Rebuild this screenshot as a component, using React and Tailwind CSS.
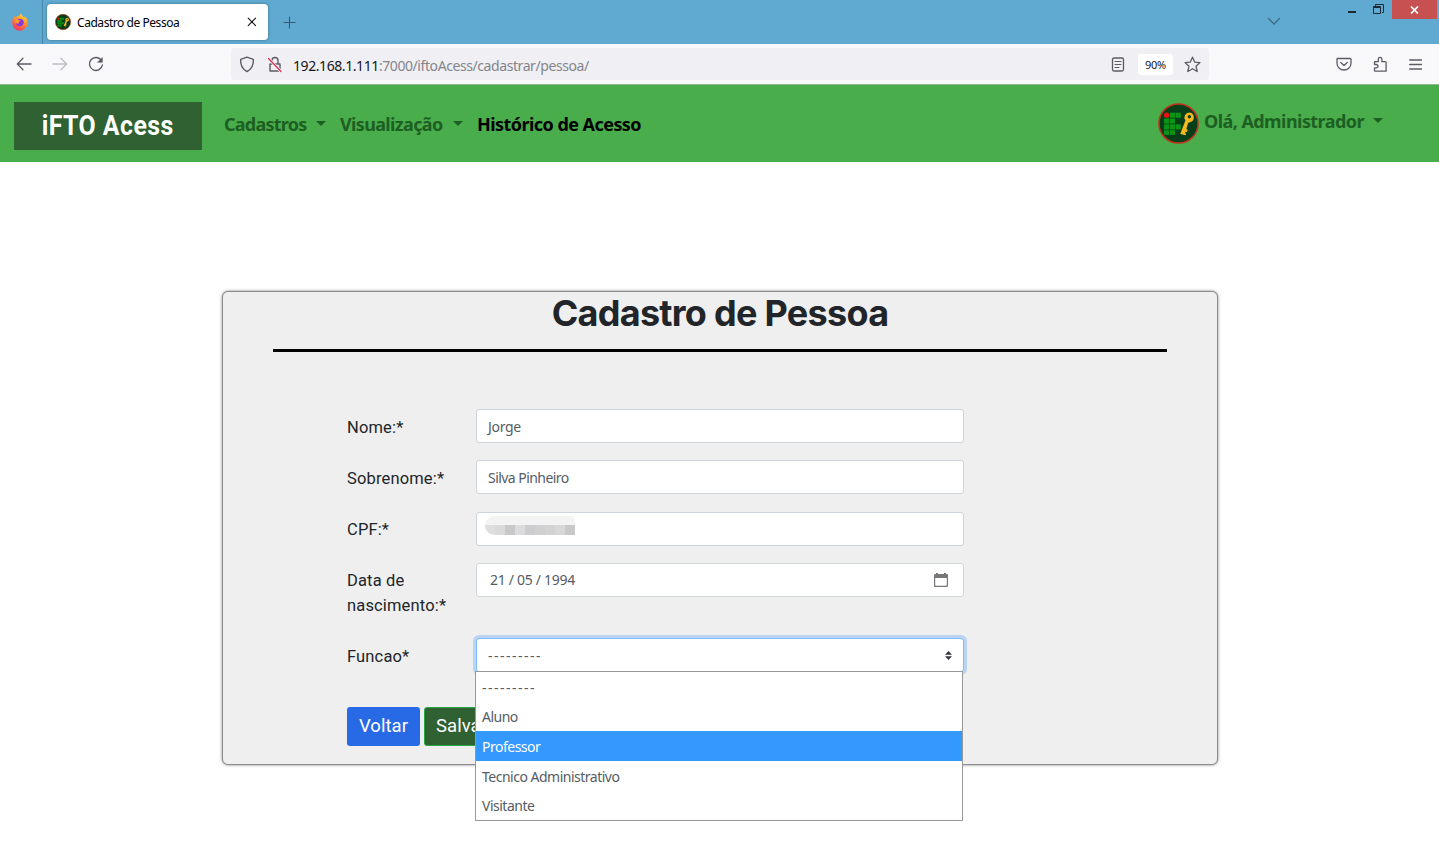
import React from "react";

const ui = "font-['Noto_Sans','Open_Sans',sans-serif]";

function Firefox() {
  return (
    <svg width="18" height="18" viewBox="0 0 18 18">
      <defs>
        <linearGradient id="fx" x1="0.8" y1="0" x2="0.3" y2="1">
          <stop offset="0" stopColor="#ffe03c" />
          <stop offset="0.45" stopColor="#ff9130" />
          <stop offset="1" stopColor="#f8305f" />
        </linearGradient>
      </defs>
      <path d="M3.2 3.2C4 4 4.4 4 5.6 4.1 6.6 3 7.6 2.8 8.6 2.6 8.6 1.8 9.4.8 10.3.6c.2 2 1.6 2.5 2.8 3.7l.9-.8c1.8 1.7 2.8 3.8 2.6 6.4A7.7 7.7 0 0 1 1.2 10C1 7.4 2 4.8 3.2 3.2z" fill="url(#fx)" />
      <path d="M6.2 6.6c2-1.6 5.4-.8 6.3 1.5.9 2.6-.8 5.2-3.5 5.2-2.3 0-4-1.3-4.3-3.4.8.7 1.9 1 3.2.4-.9-.6-.5-1.4.8-1.7-.6-.9-1.4-1.5-2.5-2z" fill="#8a3ad8" />
      <path d="M4 6.7c1.4-.7 2.8-.5 3.7.3l1.8.6c-.3.8-1.5.8-2 1.3-.2.4 0 .7.5 1.2-1.6.7-3 .2-3.8-.8z" fill="#ff9a2e" />
    </svg>
  );
}

function IfLogo({ size }) {
  return (
    <svg width={size} height={size} viewBox="0 0 40 40">
      <circle cx="20" cy="20" r="19.1" fill="#053e18" stroke="#c2301c" strokeWidth="1.5" />
      <g fill="#0b9416">
        <rect x="11.6" y="9.4" width="5" height="5" />
        <rect x="17.2" y="9.4" width="5" height="5" />
        <rect x="5.9" y="15.1" width="5" height="5" />
        <rect x="11.6" y="15.1" width="5" height="5" />
        <rect x="5.9" y="20.8" width="5" height="5" />
        <rect x="11.6" y="20.8" width="5" height="5" />
        <rect x="17.2" y="20.8" width="5" height="5" />
        <rect x="5.9" y="26.5" width="5" height="4.6" />
        <rect x="11.6" y="26.5" width="5" height="4.6" />
      </g>
      <circle cx="8.4" cy="11.9" r="2.6" fill="#ee1111" />
      <path fillRule="evenodd" fill="#f5b91f" d="M31 9.200a5 5 0 0 1 .3 9.700l-1.800.3-1.900 6.300 1.500.6-.8 2.200-1.500-.3-.4 1.500 1.200.5-.7 1.500-5.200-1.200 5-13.200A5 5 0 0 1 31 9.200zM30.600 11.600a1.700 1.700 0 1 0 .1 3.400 1.700 1.700 0 0 0-.1-3.400z" />
    </svg>
  );
}

function Stroke({ w = 16, h = 16, children, color = "text-[#5b5b66]", className = "", sw = 1.3 }) {
  return (
    <svg width={w} height={h} viewBox={`0 0 ${w} ${h}`} fill="none" stroke="currentColor" strokeWidth={sw} strokeLinecap="round" strokeLinejoin="round" className={`shrink-0 ${color} ${className}`}>
      {children}
    </svg>
  );
}

function TabBar() {
  return (
    <div className="flex h-11 bg-[#60a9d0]">
      <div className="flex w-[43px] items-center border-r border-[#4886ac] pl-[11px]">
        <Firefox />
      </div>
      <div className="mt-1 ml-1 flex h-9 w-[221px] items-center rounded bg-white pl-2 shadow-[0_0_3px_rgba(0,0,0,0.35)]">
        <IfLogo size={16} />
        <span className={`${ui} mt-[2px] ml-[6px] w-[170px] shrink-0 text-[12px] tracking-[-0.45px] text-black`}>Cadastro de Pessoa</span>
        <Stroke w={10} h={10} sw={1.1} color="text-[#15141a]">
          <path d="M1.2 1.2l7.4 7.4M8.6 1.2L1.2 8.6" />
        </Stroke>
      </div>
      <div className="ml-[15px] flex items-center">
        <Stroke w={13} h={13} sw={1.1} color="text-[#3d566b]">
          <path d="M6.5 1v11M1 6.5h11" />
        </Stroke>
      </div>
      <div className="ml-auto flex">
        <div className="mt-[17px] mr-[67px]">
          <Stroke w={14} h={9} sw={1.3} color="text-[#416a86]">
            <path d="M1.5 1.5L7 7l5.5-5.5" />
          </Stroke>
        </div>
        <div className="mt-[11px] mr-[17px] h-[2px] w-2 bg-[#1c2a33]" />
        <svg width="11" height="11" viewBox="0 0 11 11" className="mt-1 mr-[8px]" fill="none" stroke="#1c2a33">
          <path d="M2.5 2V.5h8v8H9" />
          <path d="M.5 2.500h7v7h-7z M.5 3.500h7" />
        </svg>
        <div className="mr-[2px] flex h-[19px] w-[45px] items-center justify-center bg-[#c75050]">
          <svg width="9" height="8" viewBox="0 0 9 8" stroke="#fff" strokeWidth="1.7">
            <path d="M1 .5l7 7M8 .5l-7 7" />
          </svg>
        </div>
      </div>
    </div>
  );
}

function Toolbar() {
  return (
    <div className="flex h-[41px] items-center border-b border-[#8bb98e] bg-[#f9f9fb]">
      <Stroke w={16} h={14} className="ml-4" color="text-[#5b5b66]">
        <path d="M15 7H1.500M7 1.300L1.300 7 7 12.700" />
      </Stroke>
      <Stroke w={16} h={14} className="ml-5" color="text-[#bdbdc3]">
        <path d="M1 7h13.500M9 1.300L14.700 7 9 12.700" />
      </Stroke>
      <Stroke w={16} h={16} sw={1.4} className="ml-5">
        <path d="M13.300 4.200A6.500 6.500 0 1 0 14.400 9" />
        <path d="M14.300 1.800v4.500H9.800z" fill="currentColor" strokeWidth="0.6" />
      </Stroke>
      <div className="ml-[127px] flex h-8 w-[978px] items-center rounded bg-[#f0f0f4]">
        <Stroke w={16} h={17} sw={1.4} className="ml-2">
          <path d="M8 1.200L14.300 3.400c.5 5.600-1.500 9.600-6.300 12.200C3.200 13 1.200 9 1.700 3.400z" />
        </Stroke>
        <Stroke w={16} h={17} sw={1.4} className="ml-3">
          <path d="M3 8h10v7H3zM5 8V4.500a3 3 0 0 1 6 0V8" />
          <path d="M1.500 2.500L14 15.500" stroke="#f0f0f4" strokeWidth="3" />
          <path d="M1.500 2.500L14 15.500" stroke="#e22850" strokeWidth="1.200" />
        </Stroke>
        <span className={`${ui} mt-[2px] ml-[10px] flex-1 text-[14px] tracking-[-0.42px] text-[#84848c]`}>
          <span className="text-[#15141a]">192.168.1.111</span>:7000/iftoAcess/cadastrar/pessoa/
        </span>
        <Stroke w={14} h={15}>
          <rect x="1.500" y="1" width="11" height="13" rx="1.500" />
          <path d="M4 4.500h6M4 7.500h6M4 10.500h4" strokeWidth="1.100" />
        </Stroke>
        <span className="ml-[13px] flex h-[21px] w-[35px] items-center justify-center rounded-[3px] bg-white pt-[2px] font-['Noto_Sans',sans-serif] text-[11px] tracking-[-0.3px] text-[#15141a]">90%</span>
        <Stroke w={17} h={17} sw={1.3} className="mr-2 ml-[11px]">
          <path d="M8.500 1.200l2.200 4.900 5.300.5-4 3.600 1.200 5.300-4.700-2.800-4.700 2.800L5 10.200l-4-3.600 5.300-.5z" />
        </Stroke>
      </div>
      <Stroke w={16} h={14} sw={1.3} className="ml-auto">
        <path d="M1.500 1.500h12.800a.7.7 0 0 1 .7.700V6c0 9.300-14 9.300-14 0V2.200c0-.4.200-.7.500-.7zM4.800 5.500L8 8.500l3.200-3" />
      </Stroke>
      <Stroke w={16} h={17} sw={1.300} className="ml-5">
        <path d="M2.500 5.700h3.800V3.200a1.800 1.800 0 0 1 3.600 0v2.500h3.400a.8.8 0 0 1 .8.800v8.700H3.300a.8.800 0 0 1-.8-.8v-2.500h1.800a1.700 1.700 0 0 0 0-3.400H2.500z" />
      </Stroke>
      <Stroke w={13} h={11} sw={1.300} className="mr-[17px] ml-[21px]">
        <path d="M.7 1h11.800M.7 5.500h11.800M.7 10h11.800" />
      </Stroke>
    </div>
  );
}

function Caret() {
  return (
    <svg width="10" height="5" viewBox="0 0 10 5" className="mb-px fill-[#1c5f23]">
      <path d="M0 0h10L5 5z" />
    </svg>
  );
}

function Navbar() {
  return (
    <nav className={`${ui} flex h-[77px] bg-[#49ad4c] text-[18px] leading-7 font-bold tracking-[-0.6px] whitespace-nowrap text-[#1d5f22]`}>
      <div className="mt-[17px] ml-[14px] flex h-12 w-[188px] items-center justify-center bg-[#306132]">
        <span className="scale-x-[0.92] font-['Roboto',sans-serif] text-[27px] tracking-[0.5px] text-white">iFTO Acess</span>
      </div>
      <div className="mt-[25px] ml-[22px] flex h-7 w-[116px] items-center"><span className="w-[92px] tracking-[-0.75px]">Cadastros</span><Caret /></div>
      <div className="mt-[25px] flex h-7 w-[137px] items-center"><span className="w-[113px] tracking-[-0.65px]">Visualização</span><Caret /></div>
      <div className="mt-[25px] tracking-[-0.55px] text-black">Histórico de Acesso</div>
      <div className="mt-[18px] ml-auto"><IfLogo size={41} /></div>
      <div className="mt-[22px] ml-[5px] flex h-7 w-[235px] items-center"><span className="w-[169px] tracking-[-0.56px]">Olá, Administrador</span><Caret /></div>
    </nav>
  );
}

const box = "flex h-[34px] w-[488px] items-center rounded-[3px] border border-[#ced4da] bg-white pl-[11px]";

function Row({ label, className = "h-[51px]", up = false, children }) {
  return (
    <div className={`flex ${className}`}>
      <div className={`w-[129px] font-['Roboto',sans-serif] text-[16.5px] leading-[25px] tracking-[0.15px] text-[#212529] ${up ? "pt-[5px]" : "pt-[6px]"}`}>{label}</div>
      <div className={`${ui} text-[14px] tracking-[-0.5px] text-[#555c63]`}>{children}</div>
    </div>
  );
}

const mosaic = [
  "bg-[#dedede]", "bg-[#dadadb]", "bg-[#c8c8ca]", "bg-[#dcdcdc]", "bg-[#cdcdd1]", "bg-[#d0d0d0]", "bg-[#d3d3d3]", "bg-[#d8d8d8]", "bg-[#c9c9c9]",
];

function Select() {
  const opts = ["---------", "Aluno", "Professor", "Tecnico Administrativo", "Visitante"];
  return (
    <div className="relative">
      <div className="flex h-[34px] w-[488px] items-center justify-between rounded-[3px] border border-[#80bdff] bg-white pr-[11px] pl-[11px] shadow-[0_0_0_3px_#b9d5f3]">
        <span className="tracking-[1.5px]">---------</span>
        <svg width="7" height="9" viewBox="0 0 7 9" fill="#343a40"><path d="M3.500 0L7 3.700H0zM0 5.200h7L3.500 9z" /></svg>
      </div>
      <div className="absolute top-[33px] left-[-1px] z-10 h-[150px] w-[488px] border border-[#999] bg-white">
        {opts.map((o) => (
          <div key={o} className={`flex h-[29.6px] items-center pt-px pl-[6px] ${o === "Professor" ? "bg-[#3399ff] text-white" : ""} ${o[0] === "-" ? "tracking-[1.5px]" : ""}`}>{o}</div>
        ))}
      </div>
    </div>
  );
}

export default function App() {
  return (
    <div className="h-[860px] w-[1439px] overflow-hidden bg-white">
      <TabBar />
      <Toolbar />
      <Navbar />
      <main className="mt-[129px] ml-[222px] h-[474px] w-[996px] rounded-[6px] border border-[#8c8c8c] bg-[#efefef] shadow-[0_0_3px_rgba(0,0,0,0.5)]">
        <h1 className="mx-[50px] h-[60px] border-b-[3px] border-black text-center font-['Inter',sans-serif] text-[36px] leading-[43px] font-bold tracking-[-0.72px] text-[#212529]">Cadastro de Pessoa</h1>
        <form className="mt-[57px] ml-[124px]">
          <Row label="Nome:*"><div className={`${box} tracking-[-0.3px]`}>Jorge</div></Row>
          <Row label="Sobrenome:*" className="h-[52px]"><div className={`${box} tracking-[-0.55px]`}>Silva Pinheiro</div></Row>
          <Row label="CPF:*" up>
            <div className="flex h-[34px] w-[488px] rounded-[3px] border border-[#ced4da] bg-white pl-[8px]">
              <div className="mt-[3px] flex h-[19px] w-[90px] flex-col overflow-hidden rounded-tr-[5px] rounded-l-[10px]">
                <div className="h-[9px] bg-[#f3f3f3]" />
                <div className="flex h-[10px]">{mosaic.map((m, i) => <i key={i} className={`w-[10px] ${m}`} />)}</div>
              </div>
            </div>
          </Row>
          <Row label={<>Data de<br />nascimento:*</>} className="h-[75px]" up>
            <div className={`${box} justify-between pr-[15px] pb-px pl-[13px] tracking-[-0.3px]`}>
              <span>21 / 05 / 1994</span>
              <svg width="14" height="14" viewBox="0 0 14 14" className="fill-[#77777b]">
                <path fillRule="evenodd" d="M2 1V0h2v1h6V0h2v1h.7c.7 0 1.300.6 1.300 1.300v10.400c0 .7-.6 1.300-1.300 1.300H1.300C.6 14 0 13.400 0 12.700V2.300C0 1.600.6 1 1.300 1zM1.200 5v7c0 .5.200.8.700.8h10.200c.5 0 .7-.3.700-.8V5z" />
              </svg>
            </div>
          </Row>
          <Row label="Funcao*" className="h-[69px]"><Select /></Row>
          <div className="flex gap-1 font-['Roboto',sans-serif] text-[18.500px] tracking-[0.05px] text-white">
            <div className="flex h-[39px] w-[73px] items-center justify-center rounded-[3px] bg-[#286ae6]">Voltar</div>
            <div className="flex h-[39px] w-[75px] items-center justify-center rounded-[3px] border border-[#28a745] bg-[#306132]">Salvar</div>
          </div>
        </form>
      </main>
    </div>
  );
}
